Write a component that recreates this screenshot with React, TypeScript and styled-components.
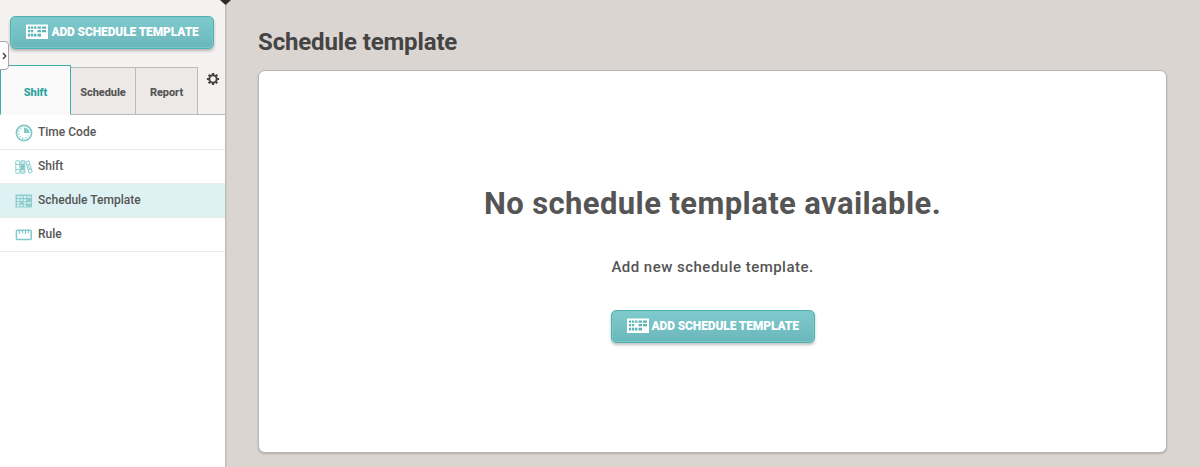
import React from "react";
import styled, { createGlobalStyle } from "styled-components";

const GlobalStyle = createGlobalStyle`
  *, *::before, *::after { box-sizing: border-box; }
  body { margin: 0; font-family: Roboto, sans-serif; color: #555; background: #dbd5d1; }
  h1, h2, p { margin: 0; }
  button { font-family: inherit; }
`;

const Page = styled.div`
  display: flex;
  height: 467px;
  overflow: hidden;
  position: relative;
`;

const Sidebar = styled.aside`
  width: 225px;
  flex: none;
  background: #fff;
`;

const SidebarHeader = styled.div`
  height: 115px;
  background: #f4f2f1;
  display: flex;
  flex-direction: column;
  justify-content: space-between;
  padding-top: 16px;
`;

const PrimaryButton = styled.button<{ $inset?: number }>`
  display: flex;
  align-items: center;
  width: 204px;
  height: 33px;
  flex: none;
  margin: 0 0 0 ${(p) => p.$inset ?? 0}px;
  padding: 0 0 2px 15px;
  border: 1px solid #51b3b1;
  border-radius: 5px;
  background: linear-gradient(#7fcacd, #6ab7bb);
  box-shadow: inset 0 0 0 1px #7ac7c8, 0 2px 3px rgba(0, 0, 0, 0.25);
  color: #fff;
  font-size: 12px;
  font-weight: 900;
  letter-spacing: -0.12px;
  line-height: 16px;
  white-space: nowrap;

  svg { flex: none; margin-right: 3px; }
`;

const Tabs = styled.div`
  display: flex;
  align-items: flex-end;
  height: 50px;
  border-bottom: 1px solid #bdbaba;
`;

const Tab = styled.div<{ $active?: boolean; $width: number }>`
  display: flex;
  align-items: center;
  justify-content: center;
  width: ${(p) => p.$width}px;
  height: ${(p) => (p.$active ? 50 : 48)}px;
  margin-bottom: -1px;
  padding-top: ${(p) => (p.$active ? 5 : 3)}px;
  border: 1px solid ${(p) => (p.$active ? "#3fadab" : "#bdbaba")};
  border-left-width: ${(p) => (p.$active ? 1 : 0)}px;
  border-bottom-color: ${(p) => (p.$active ? "#fafafa" : "#bdbaba")};
  background: ${(p) => (p.$active ? "#fafafa" : "#ede9e8")};
  color: ${(p) => (p.$active ? "#27a19d" : "#555")};
  font-size: 11px;
  font-weight: 800;
  letter-spacing: -0.06px;
`;

const SettingsButton = styled.div`
  flex: 1;
  height: 49px;
  display: flex;
  justify-content: center;
  padding: 7px 0 0 2px;
`;

const Menu = styled.nav`
  display: flex;
  flex-direction: column;
`;

const MenuItem = styled.div<{ $active?: boolean; $height: number }>`
  display: flex;
  align-items: center;
  height: ${(p) => p.$height}px;
  padding: 0 0 1px 15px;
  border-bottom: 1px solid #ebeaea;
  background: ${(p) => (p.$active ? "#def2f3" : "#fff")};
  font-size: 12px;
  font-weight: 500;
  line-height: 16px;

  svg { flex: none; margin: 2px 5px 0 0; }
`;

const Drawer = styled.div`
  position: absolute;
  left: -4px;
  top: 41px;
  width: 13px;
  height: 29px;
  padding: 10px 0 0 5px;
  border: 1px solid #aaa5a3;
  border-radius: 4px;
  background: #fff;

  svg { display: block; }
`;

const Notch = styled.svg`
  position: absolute;
  left: 219px;
  top: 0;
`;

const Main = styled.main`
  flex: 1;
  border-left: 1px solid #c1bcb9;
  padding: 28px 33px 0 32px;
  box-shadow: inset 1px 0 0 #cfc9c5;
`;

const Title = styled.h1`
  font-size: 24px;
  font-weight: 700;
  line-height: 28px;
  letter-spacing: -0.14px;
  color: #444;
`;

const Panel = styled.section`
  display: flex;
  flex-direction: column;
  align-items: center;
  width: 909px;
  height: 383px;
  margin-top: 14px;
  padding-top: 113px;
  border: 1px solid #b9b7b5;
  border-radius: 7px;
  background: #fff;
  box-shadow: 0 1px 2px rgba(0, 0, 0, 0.2);
`;

const EmptyTitle = styled.h2`
  font-size: 31px;
  font-weight: 700;
  line-height: 40px;
  letter-spacing: 0.4px;
`;

const EmptyText = styled.p`
  margin: 33px 0 33px;
  font-size: 15px;
  font-weight: 500;
  line-height: 20px;
  letter-spacing: 0.48px;
`;

const CalendarIcon = () => (
  <svg width="22" height="15" viewBox="0 0 22 15">
    <path fill="#fff" d="M0 .5h22v14.500H0z" />
    <path
      fill="#5cb3b5"
      d="M2 2.500h2.200v2.200H2zM5 2.500h2.200v2.200H5zM8 2.500h2.400v2.200H8zM11.500 2.500h3.500v2.200h-3.500zM16 2.500h4v2.200h-4zM2 6h2.200v2.300H2zM5 6h2.200v2.300H5zM11.500 6h3.500v2.300h-3.500zM16 6h4v2.300h-4zM2 9.700h2.200v2.800H2zM5 9.700h2.200v2.800H5zM8 9.700h2.400v2.800H8zM11.500 9.700h3.500v2.800h-3.500z"
    />
  </svg>
);

const ClockIcon = () => (
  <svg width="18" height="18" viewBox="0 0 18 18" fill="none" stroke="#82c9c9">
    <circle cx="9" cy="9" r="7.600" strokeWidth="1.700" />
    <path fill="#82c9c9" stroke="none" d="M9 3.500A5.500 5.500 0 0 1 14.500 9H9z" />
    <path strokeWidth="1.200" strokeDasharray="1.200 1.680" d="M13.500 11.500A5.200 5.200 0 1 1 7.500 4" />
  </svg>
);

const BindersIcon = () => (
  <svg width="18" height="14" viewBox="0 0 18 14" fill="none" stroke="#8acccc">
    <rect x=".8" y=".8" width="4" height="12.400" rx=".5" />
    <rect x="5.800" y=".8" width="4" height="12.400" rx=".5" fill="#cdeaea" />
    <path d="M1 4.500h3.500M1 9.500h3.500M6 4.500h3.500M6 9.500h3.500" />
    <path fill="#82c9c9" stroke="none" d="M6 5h3.500v4.500H6z" />
    <path d="M10.800 1.900l3-1.200 3.400 11.200-3 1.300zM11.800 5l3-1M13.200 9.800l3-1M13.300 5.500l1.200 3.500" />
  </svg>
);

const TemplateIcon = () => (
  <svg width="18" height="14" viewBox="0 0 18 14">
    <path fill="#8fcece" d="M.5.500h16.500v13H.5z" />
    <path
      fill="#dff3f3"
      d="M2 2h2.500v2H2zM5.500 2h2v2h-2zM8.800 2h2.200v2H8.800zM12.200 2h1.500v2h-1.500zM14.600 2H16v2h-1.400zM2 5.200h2.500v1.800H2zM5.500 5.200h2v1.800h-2zM8.800 5.200h2.200v1.800H8.800zM2 8h2.500v1.800H2zM8.800 8h2.200v1.800H8.800zM12.200 8h1.500v1.800h-1.500zM14.600 8H16v1.800h-1.400zM2 10.800h2.500v1.600H2zM5.500 10.800h2v1.600h-2zM8.800 10.800h2.200v1.600H8.800z"
    />
  </svg>
);

const RulerIcon = () => (
  <svg width="18" height="12" viewBox="0 0 18 12" fill="none" stroke="#82c9c9">
    <rect x="1.400" y="1.300" width="14.800" height="9.200" rx="1" strokeWidth="1.500" />
    <path strokeWidth="1.200" d="M4.500 2v3M7.500 2v2.300M10.500 2v3M13.400 2v2.300" />
  </svg>
);

const GearIcon = () => (
  <svg width="14" height="14" viewBox="0 0 14 14" fill="none" stroke="#4a4040">
    <circle cx="7" cy="7" r="3.700" strokeWidth="2" />
    <path strokeWidth="2.200" d="M7 .9v2M7 11.100v2M.9 7h2M11.100 7h2M2.700 2.700l1.400 1.400M9.900 9.900l1.400 1.400M2.700 11.300l1.400-1.400M9.900 4.100l1.400-1.400" />
  </svg>
);

const menu = [
  { label: "Time Code", icon: <ClockIcon />, height: 35 },
  { label: "Shift", icon: <BindersIcon />, height: 34 },
  { label: "Schedule Template", icon: <TemplateIcon />, height: 34, active: true },
  { label: "Rule", icon: <RulerIcon />, height: 34 },
];

export default function App() {
  return (
    <Page>
      <GlobalStyle />
      <Sidebar>
        <SidebarHeader>
          <PrimaryButton $inset={10.4}>
            <CalendarIcon />
            ADD SCHEDULE TEMPLATE
          </PrimaryButton>
          <Tabs>
            <Tab $active $width={71}>Shift</Tab>
            <Tab $width={65}>Schedule</Tab>
            <Tab $width={62}>Report</Tab>
            <SettingsButton>
              <GearIcon />
            </SettingsButton>
          </Tabs>
        </SidebarHeader>
        <Menu>
          {menu.map((item) => (
            <MenuItem key={item.label} $active={item.active} $height={item.height}>
              {item.icon}
              {item.label}
            </MenuItem>
          ))}
        </Menu>
      </Sidebar>
      <Main>
        <Title>Schedule template</Title>
        <Panel>
          <EmptyTitle>No schedule template available.</EmptyTitle>
          <EmptyText>Add new schedule template.</EmptyText>
          <PrimaryButton>
            <CalendarIcon />
            ADD SCHEDULE TEMPLATE
          </PrimaryButton>
        </Panel>
      </Main>
      <Drawer>
        <svg width="5" height="8" viewBox="0 0 5 8" fill="none" stroke="#4a4040" strokeWidth="1.400">
          <path d="M1 1l2.700 3L1 7" />
        </svg>
      </Drawer>
      <Notch width="13" height="5" viewBox="0 0 13 5">
        <path fill="#2e2a2a" d="M1 0h11L6.500 5z" />
      </Notch>
    </Page>
  );
}
